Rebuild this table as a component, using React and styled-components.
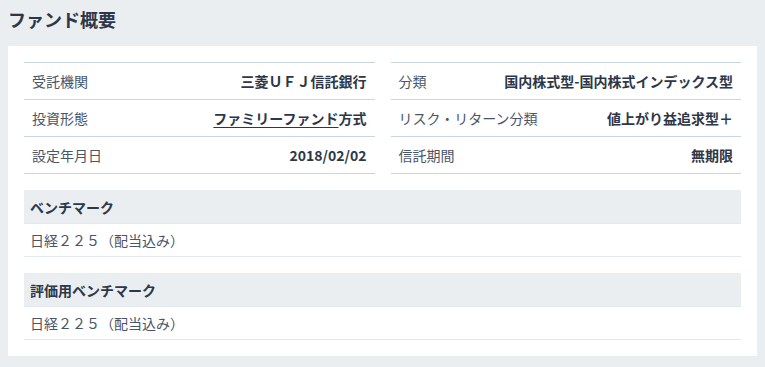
import React from 'react';
import styled, { createGlobalStyle } from 'styled-components';

const GlobalStyle = createGlobalStyle`
  body {
    margin: 8px;
    background: #ebeef1;
    font-family: "Noto Sans CJK JP", "Noto Sans", sans-serif;
    color: #2d3748;
  }
`;

const Title = styled.h2`
  margin: 0;
  height: 38px;
  font-size: 18px;
  line-height: 22px;
  font-weight: 700;
  color: #2d3748;
`;

const Card = styled.section`
  background: #fff;
  padding: 16px;
`;

const Columns = styled.div`
  display: grid;
  grid-template-columns: 1fr 1fr;
  gap: 16px;
`;

const InfoTable = styled.div`
  border-top: 1px solid #cbd5e0;
`;

const InfoRow = styled.div`
  display: flex;
  justify-content: space-between;
  align-items: center;
  height: 36px;
  padding: 0 8px;
  border-bottom: 1px solid #cbd5e0;
  font-size: 14px;
`;

const Label = styled.span`
  color: #4a5568;
`;

const Value = styled.span`
  font-weight: 700;
  color: #2d3748;
`;

const Link = styled.a`
  color: #2d3748;
  text-decoration: underline;
  text-underline-offset: 3px;
`;

const Section = styled.div`
  margin-top: 16px;
`;

const SectionHead = styled.div`
  height: 33px;
  display: flex;
  align-items: center;
  padding: 0 6px;
  background: #ebeef1;
  border-bottom: 1px solid #e2e8f0;
  font-size: 14px;
  font-weight: 700;
  color: #2d3748;
`;

const SectionBody = styled.div`
  height: 32px;
  display: flex;
  align-items: center;
  padding: 0 6px;
  border-bottom: 1px solid #e2e8f0;
  font-size: 14px;
  color: #4a5568;
`;

const left = [
  ['受託機関', '三菱ＵＦＪ信託銀行'],
  ['投資形態', <><Link href="#">ファミリーファンド</Link>方式</>],
  ['設定年月日', '2018/02/02'],
];

const right = [
  ['分類', '国内株式型-国内株式インデックス型'],
  ['リスク・リターン分類', '値上がり益追求型＋'],
  ['信託期間', '無期限'],
];

const benchmarks = [
  ['ベンチマーク', '日経２２５（配当込み）'],
  ['評価用ベンチマーク', '日経２２５（配当込み）'],
];

const Table = ({ rows }) => (
  <InfoTable>
    {rows.map(([label, value]) => (
      <InfoRow key={label}>
        <Label>{label}</Label>
        <Value>{value}</Value>
      </InfoRow>
    ))}
  </InfoTable>
);

export default function App() {
  return (
    <>
      <GlobalStyle />
      <Title>ファンド概要</Title>
      <Card>
        <Columns>
          <Table rows={left} />
          <Table rows={right} />
        </Columns>
        {benchmarks.map(([head, body]) => (
          <Section key={head}>
            <SectionHead>{head}</SectionHead>
            <SectionBody>{body}</SectionBody>
          </Section>
        ))}
      </Card>
    </>
  );
}
